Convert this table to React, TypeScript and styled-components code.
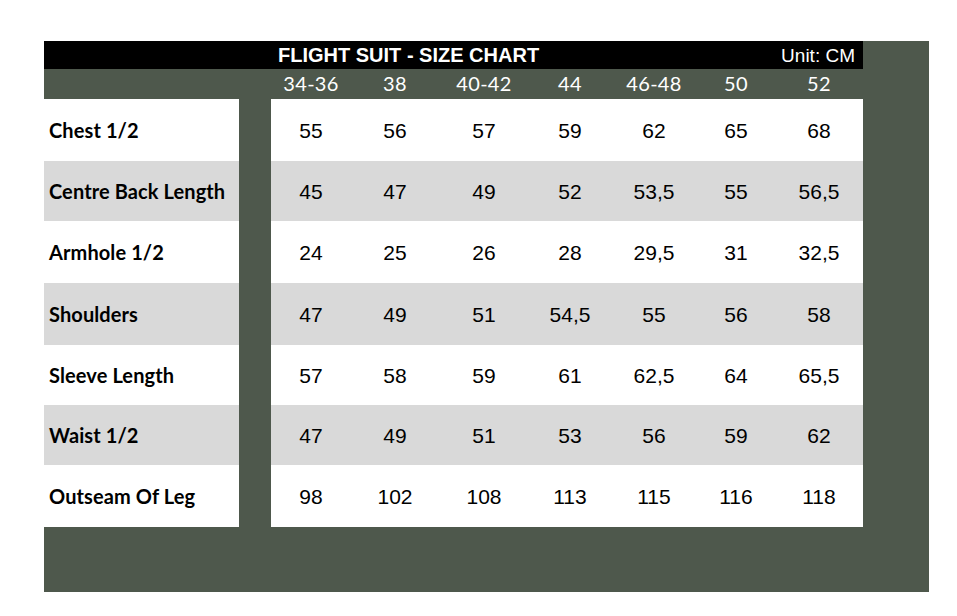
import React from "react";
import styled, { createGlobalStyle } from "styled-components";

const Global = createGlobalStyle`
  html, body { margin: 0; padding: 0; background: #ffffff; }
  body { font-family: "Liberation Sans", Arial, sans-serif; }
`;

const Page = styled.div`
  padding: 41px 0 0 44px;
`;

const Panel = styled.div`
  width: 885px;
  height: 551px;
  background: #4e584c;
`;

const Chart = styled.div`
  width: 819px;
  display: flex;
  flex-direction: column;
`;

const TitleBar = styled.div`
  height: 28px;
  background: #000;
  color: #fff;
  display: flex;
  align-items: flex-end;
  justify-content: space-between;
  padding: 0 8px 4px 234px;
  box-sizing: border-box;
`;

const Title = styled.div`
  font-family: "Liberation Sans", Arial, sans-serif;
  font-weight: 700;
  font-size: 20px;
  line-height: 20px;
`;

const Unit = styled.div`
  font-family: "Liberation Sans", Arial, sans-serif;
  font-size: 19px;
  line-height: 19px;
`;

const cols = "80px 88px 90px 82px 86px 78px 88px";

const SizeRow = styled.div`
  height: 30px;
  display: grid;
  grid-template-columns: 227px ${cols};
  align-items: center;
`;

const SizeCell = styled.div`
  color: #fff;
  font-family: Lato, "Open Sans", sans-serif;
  font-size: 20px;
  letter-spacing: 0.3px;
  text-align: center;
  margin-top: -2px;
`;

const Row = styled.div<{ $h: number; $shade: boolean }>`
  height: ${(p) => p.$h}px;
  display: flex;
  gap: 32px;
  & > * { background: ${(p) => (p.$shade ? "#d9d9d9" : "#ffffff")}; }
`;

const Label = styled.div`
  width: 195px;
  box-sizing: border-box;
  padding-left: 5px;
  display: flex;
  align-items: center;
  font-family: Lato, "Open Sans", sans-serif;
  font-weight: 700;
  font-size: 20px;
  letter-spacing: 0.1px;
  color: #000;
`;

const Values = styled.div`
  flex: 1;
  display: grid;
  grid-template-columns: ${cols};
  align-items: center;
`;

const Value = styled.div`
  text-align: center;
  font-family: "Liberation Sans", Arial, sans-serif;
  font-size: 21px;
  padding-top: 2px;
  color: #000;
`;

const sizes = ["34-36", "38", "40-42", "44", "46-48", "50", "52"];

const rows: { label: string; h: number; values: string[] }[] = [
  { label: "Chest 1/2", h: 62, values: ["55", "56", "57", "59", "62", "65", "68"] },
  { label: "Centre Back Length", h: 60, values: ["45", "47", "49", "52", "53,5", "55", "56,5"] },
  { label: "Armhole 1/2", h: 62, values: ["24", "25", "26", "28", "29,5", "31", "32,5"] },
  { label: "Shoulders", h: 62, values: ["47", "49", "51", "54,5", "55", "56", "58"] },
  { label: "Sleeve Length", h: 60, values: ["57", "58", "59", "61", "62,5", "64", "65,5"] },
  { label: "Waist 1/2", h: 60, values: ["47", "49", "51", "53", "56", "59", "62"] },
  { label: "Outseam Of Leg", h: 62, values: ["98", "102", "108", "113", "115", "116", "118"] },
];

export default function App() {
  return (
    <Page>
      <Global />
      <Panel>
        <Chart>
          <TitleBar>
            <Title>FLIGHT SUIT - SIZE CHART</Title>
            <Unit>Unit: CM</Unit>
          </TitleBar>
          <SizeRow>
            <div />
            {sizes.map((s) => (
              <SizeCell key={s}>{s}</SizeCell>
            ))}
          </SizeRow>
          {rows.map((r, i) => (
            <Row key={r.label} $h={r.h} $shade={i % 2 === 1}>
              <Label>{r.label}</Label>
              <Values>
                {r.values.map((v, j) => (
                  <Value key={j}>{v}</Value>
                ))}
              </Values>
            </Row>
          ))}
        </Chart>
      </Panel>
    </Page>
  );
}
